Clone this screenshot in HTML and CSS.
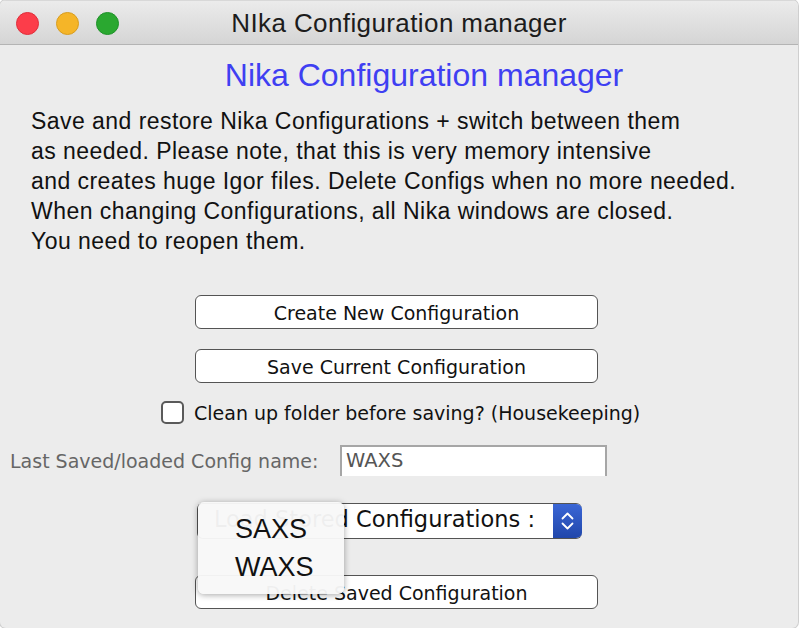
FILE: index.html
```html
<!DOCTYPE html>
<html>
<head>
<meta charset="utf-8">
<link rel="stylesheet" href="styles.css">
</head>
<body>
<div class="window">
  <div class="titlebar">
    <div class="lights">
      <span class="light red"></span>
      <span class="light yellow"></span>
      <span class="light green"></span>
    </div>
    <div class="wtitle">NIka Configuration manager</div>
  </div>
  <div class="content">
    <h1 class="heading">Nika Configuration manager</h1>
    <p class="intro">Save and restore Nika Configurations + switch between them<br>as needed. Please note, that this is very memory intensive<br>and creates huge Igor files. Delete Configs when no more needed.<br>When changing Configurations, all Nika windows are closed.<br>You need to reopen them.</p>
    <div class="btn btn-first">Create New Configuration</div>
    <div class="btn btn-second">Save Current Configuration</div>
    <div class="check-row">
      <span class="checkbox"></span>
      <span class="check-label">Clean up folder before saving? (Housekeeping)</span>
    </div>
    <div class="field-row">
      <span class="field-label">Last Saved/loaded Config name:</span>
      <span class="field-input">WAXS</span>
    </div>
    <div class="popup-row">
      <div class="popup">
        <span class="popup-text">Load Stored Configurations :</span>
        <span class="popup-arrows">
          <svg width="29" height="36" viewBox="0 0 29 36">
            <path d="M9.5 15.5 L14.5 10.5 L19.5 15.5" fill="none" stroke="#fff" stroke-width="1.8" stroke-linecap="round" stroke-linejoin="round"/>
            <path d="M9.5 20.5 L14.5 25.5 L19.5 20.5" fill="none" stroke="#fff" stroke-width="1.8" stroke-linecap="round" stroke-linejoin="round"/>
          </svg>
        </span>
      </div>
      <div class="menu">
        <div class="menu-item">SAXS</div>
        <div class="menu-item">WAXS</div>
      </div>
    </div>
    <div class="btn btn-delete">Delete Saved Configuration</div>
  </div>
</div>
</body>
</html>
```

FILE: styles.css
```css
html, body {
  margin: 0;
  padding: 0;
  background: #ffffff;
}
.window {
  width: 798px;
  height: 628px;
  background: #ececec;
  border-radius: 6px;
  overflow: hidden;
  font-family: "Liberation Sans", Arial, sans-serif;
  color: #000;
  box-shadow: 0 0 0 1px #cfcfcf;
}
.titlebar {
  height: 43px;
  border-bottom: 1px solid #b4b4b4;
  background: linear-gradient(#ebebeb, #d5d5d5);
  display: flex;
  align-items: center;
  border-top: 1px solid #d8d8d8;
  box-sizing: content-box;
}
.lights {
  display: flex;
  gap: 17px;
  padding: 2px 0 0 16px;
  width: 200px;
}
.light {
  width: 23px;
  height: 23px;
  border-radius: 50%;
  box-sizing: border-box;
}
.red { background: #fc3d4a; border: 1px solid #df2e3a; }
.yellow { background: #f5b528; border: 1px solid #d89d1f; }
.green { background: #2aa830; border: 1px solid #1f922a; }
.wtitle {
  flex: 1;
  text-align: center;
  margin-left: -216px;
  font-size: 26px;
  letter-spacing: 0.4px;
  color: #1c1c1c;
  padding-top: 2px;
}
.content {
  display: flex;
  flex-direction: column;
}
.heading {
  margin: 15px 0 0 50px;
  font-weight: normal;
  font-size: 32px;
  line-height: 31px;
  text-align: center;
  color: #3f3ff2;
}
.intro {
  margin: 15px 0 0 31px;
  font-size: 23px;
  letter-spacing: 0.45px;
  line-height: 30px;
  color: #111;
}
.btn {
  margin-left: 195px;
  width: 403px;
  height: 34px;
  box-sizing: border-box;
  border: 1.6px solid #545454;
  border-radius: 6px;
  background: #fff;
  font-family: "DejaVu Sans", sans-serif;
  font-size: 19px;
  display: flex;
  align-items: center;
  justify-content: center;
  color: #111;
  padding-top: 1px;
}
.btn-first { margin-top: 39px; }
.btn-second { margin-top: 20px; }
.check-row {
  margin: 18px 0 0 161px;
  display: flex;
  align-items: center;
  gap: 10px;
}
.checkbox {
  width: 23px;
  height: 23px;
  box-sizing: border-box;
  border: 2px solid #5a5a5a;
  border-radius: 5px;
  background: #fff;
}
.check-label {
  font-family: "DejaVu Sans", sans-serif;
  font-size: 19px;
  color: #111;
}
.field-row {
  margin: 21px 0 0 10px;
  display: flex;
  align-items: center;
}
.field-label {
  font-family: "DejaVu Sans", sans-serif;
  font-size: 19px;
  color: #666;
  width: 330px;
  white-space: nowrap;
}
.field-input {
  width: 267px;
  height: 31px;
  box-sizing: border-box;
  border: 2px solid #a6a6a6;
  border-bottom: none;
  background: #fff;
  font-family: "DejaVu Sans", sans-serif;
  font-size: 19.5px;
  color: #555;
  padding: 2px 0 0 4px;
}
.popup-row {
  margin: 27px 0 0 197px;
  position: relative;
  height: 36px;
}
.popup {
  width: 385px;
  height: 36px;
  box-sizing: border-box;
  display: flex;
  border-radius: 6px;
  overflow: hidden;
  background: #fff;
  border: 1.6px solid #545454;
  border-right: none;
}
.popup-text {
  flex: 1;
  font-family: "DejaVu Sans", sans-serif;
  font-size: 22.5px;
  text-align: right;
  padding: 2px 18px 0 0;
  color: #111;
  white-space: nowrap;
  overflow: hidden;
}
.popup-arrows {
  width: 29px;
  background: linear-gradient(#3c68d8, #1f45a8);
  display: flex;
  align-items: center;
  margin: -2px 0;
}
.menu {
  position: absolute;
  left: 1px;
  top: -1px;
  width: 146px;
  height: 92px;
  box-sizing: border-box;
  background: rgba(248, 248, 248, 0.96);
  border-radius: 6px;
  box-shadow: 0 1px 6px rgba(0,0,0,0.35);
  padding: 8px 0 0 37px;
}
.menu-item {
  font-size: 27px;
  line-height: 38px;
  color: #111;
}
.btn-delete { margin-top: 36px; }
```
